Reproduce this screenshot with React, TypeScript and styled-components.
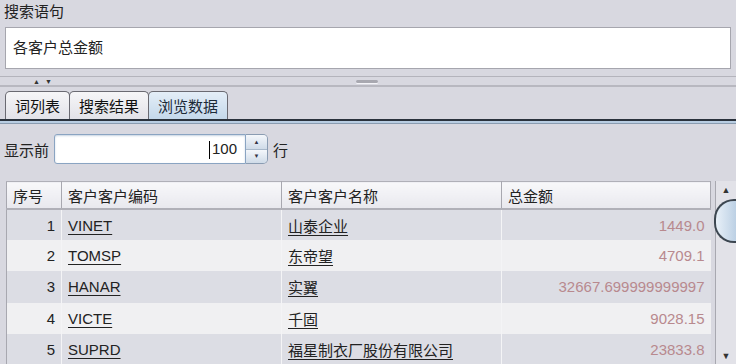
import styled, { createGlobalStyle } from "styled-components";

const rows = [
  { no: 1, code: "VINET", name: "山泰企业", total: "1449.0" },
  { no: 2, code: "TOMSP", name: "东帝望", total: "4709.1" },
  { no: 3, code: "HANAR", name: "实翼", total: "32667.699999999997" },
  { no: 4, code: "VICTE", name: "千固", total: "9028.15" },
  { no: 5, code: "SUPRD", name: "福星制衣厂股份有限公司", total: "23833.8" },
];

const tabs = ["词列表", "搜索结果", "浏览数据"];

export default function App() {
  return (
    <S.Page>
      <Global />
      <S.Label>搜索语句</S.Label>
      <S.Query>各客户总金额</S.Query>
      <S.Divider>
        <S.Arrows>
          <span>▲</span>
          <span>▼</span>
        </S.Arrows>
        <S.Grip />
      </S.Divider>
      <S.TabBar>
        {tabs.map((t, i) => (
          <S.Tab key={t} $active={i === 2}>
            {t}
          </S.Tab>
        ))}
      </S.TabBar>
      <S.TabLine />
      <S.LimitRow>
        <span>显示前</span>
        <S.Spinner>
          <S.SpinInput>
            <S.Caret />
            100
          </S.SpinInput>
          <S.SpinButtons>
            <S.SpinBtn>▲</S.SpinBtn>
            <S.SpinBtn>▼</S.SpinBtn>
          </S.SpinButtons>
        </S.Spinner>
        <span>行</span>
      </S.LimitRow>
      <S.TableWrap>
        <S.Table>
          <colgroup>
            <col style={{ width: 55 }} />
            <col style={{ width: 220 }} />
            <col style={{ width: 220 }} />
            <col />
          </colgroup>
          <thead>
            <tr>
              <S.Th>序号</S.Th>
              <S.Th>客户客户编码</S.Th>
              <S.Th>客户客户名称</S.Th>
              <S.Th>总金额</S.Th>
            </tr>
          </thead>
          <tbody>
            {rows.map((r, i) => (
              <S.Tr key={r.no} $odd={i % 2 === 0}>
                <S.NoCell>{r.no}</S.NoCell>
                <S.Td>
                  <S.Link>{r.code}</S.Link>
                </S.Td>
                <S.Td>
                  <S.Link>{r.name}</S.Link>
                </S.Td>
                <S.Amount>{r.total}</S.Amount>
              </S.Tr>
            ))}
          </tbody>
        </S.Table>
        <S.ScrollBar>
          <S.ScrollBtn>▲</S.ScrollBtn>
          <S.Thumb />
          <S.Track />
          <S.ScrollBtn>▼</S.ScrollBtn>
        </S.ScrollBar>
      </S.TableWrap>
    </S.Page>
  );
}

const Global = createGlobalStyle`
  body {
    margin: 0;
    background: #d8d8e0;
    font-family: "Liberation Sans", "Noto Sans CJK SC", sans-serif;
    color: #222;
  }
`;

const S = {
  Page: styled.div`
    width: 736px;
    height: 364px;
    overflow: hidden;
    background: #d8d8e0;
    font-size: 15px;
  `,
  Label: styled.div`
    padding: 3px 0 0 4px;
    height: 24px;
    box-sizing: border-box;
    line-height: 18px;
  `,
  Query: styled.div`
    margin: 3px 5px 0 5px;
    height: 42px;
    box-sizing: border-box;
    background: #fff;
    border: 1px solid #a6a6ae;
    padding: 0 7px;
    line-height: 40px;
  `,
  Divider: styled.div`
    margin-top: 7px;
    height: 11px;
    border-top: 1px solid #b4b4bc;
    border-bottom: 2px solid #b8b8c0;
    box-sizing: border-box;
    display: flex;
    align-items: center;
  `,
  Arrows: styled.div`
    display: flex;
    gap: 5px;
    margin-left: 33px;
    font-size: 7px;
    color: #333;
  `,
  Grip: styled.div`
    margin-left: 304px;
    width: 22px;
    height: 3px;
    border-radius: 2px;
    background: #a8a8b0;
    box-shadow: 0 1px 0 #f4f4f8;
  `,
  TabBar: styled.div`
    display: flex;
    padding: 4px 0 0 5px;
    height: 32px;
    box-sizing: border-box;
    align-items: flex-end;
  `,
  Tab: styled.div<{ $active: boolean }>`
    height: 28px;
    box-sizing: border-box;
    padding: 0 9px;
    display: flex;
    align-items: center;
    border: 1px solid #6a6a72;
    border-bottom: none;
    border-radius: 5px 5px 0 0;
    margin-right: -1px;
    color: ${(p) => (p.$active ? "#1c2a38" : "#111")};
    background: ${(p) =>
      p.$active
        ? "linear-gradient(#e4eef8, #c4d8ea)"
        : "linear-gradient(#f6f6f8, #e2e2e8)"};
  `,
  TabLine: styled.div`
    height: 2px;
    border-top: 2px solid #2a323c;
    background: #b8cde2;
    border-bottom: 1px solid #8a9cb0;
  `,
  LimitRow: styled.div`
    display: flex;
    align-items: center;
    gap: 5px;
    padding: 10px 0 0 4px;
    height: 30px;
  `,
  Spinner: styled.div`
    display: flex;
    align-items: center;
  `,
  SpinInput: styled.div`
    position: relative;
    width: 192px;
    height: 30px;
    box-sizing: border-box;
    background: #fff;
    border: 1px solid #8aa4c2;
    border-radius: 3px 0 0 3px;
    box-shadow: inset 0 1px 2px #c8d4e2;
    text-align: right;
    padding-right: 8px;
    line-height: 28px;
  `,
  Caret: styled.span`
    position: absolute;
    right: 35px;
    top: 6px;
    width: 1px;
    height: 18px;
    background: #000;
  `,
  SpinButtons: styled.div`
    display: flex;
    flex-direction: column;
    width: 22px;
    height: 30px;
    border: 1px solid #8a9cb2;
    border-left: none;
    border-radius: 0 5px 5px 0;
    overflow: hidden;
    box-sizing: border-box;
  `,
  SpinBtn: styled.div`
    flex: 1;
    display: flex;
    align-items: center;
    justify-content: center;
    font-size: 6px;
    color: #334;
    background: linear-gradient(#f4f7fb, #cfdbe8);
    & + & {
      border-top: 1px solid #a8b8ca;
    }
  `,
  TableWrap: styled.div`
    display: flex;
    margin-top: 17px;
    padding-left: 6px;
  `,
  Table: styled.table`
    width: 706px;
    border-collapse: collapse;
    table-layout: fixed;
    border-left: 1px solid #a8a8b0;
  `,
  Th: styled.th`
    height: 26px;
    padding: 0 6px;
    text-align: left;
    font-weight: normal;
    background: linear-gradient(#f8f8fa, #e8e8ee);
    border: 1px solid #a8a8b0;
    border-bottom: 2px solid #b0b0b8;
    border-top: 1px solid #b0b0b8;
  `,
  Tr: styled.tr<{ $odd: boolean }>`
    height: 31px;
    background: ${(p) => (p.$odd ? "#dcdde4" : "#f0f0f2")};
  `,
  NoCell: styled.td`
    text-align: right;
    padding: 0 6px;
    border-right: 1px solid #f4f4f6;
  `,
  Td: styled.td`
    padding: 0 6px;
    border-right: 1px solid #f4f4f6;
    white-space: nowrap;
    overflow: hidden;
  `,
  Link: styled.span`
    color: #222;
    text-decoration: underline;
    text-underline-offset: 3px;
  `,
  Amount: styled.td`
    text-align: right;
    padding: 0 6px;
    color: #b8898e;
    white-space: nowrap;
  `,
  ScrollBar: styled.div`
    margin-left: 4px;
    width: 20px;
    height: 184px;
    display: flex;
    flex-direction: column;
    border-left: 1px solid #a8a8b0;
    background: #e2e2e8;
  `,
  ScrollBtn: styled.div`
    height: 18px;
    display: flex;
    align-items: center;
    justify-content: center;
    font-size: 9px;
    color: #333;
  `,
  Thumb: styled.div`
    height: 40px;
    margin-left: -2px;
    border: 2px solid #3c4650;
    border-radius: 20px 0 0 20px;
    border-right: none;
    background: linear-gradient(90deg, #e8f0f8, #bcd0e4);
  `,
  Track: styled.div`
    flex: 1;
  `,
};
